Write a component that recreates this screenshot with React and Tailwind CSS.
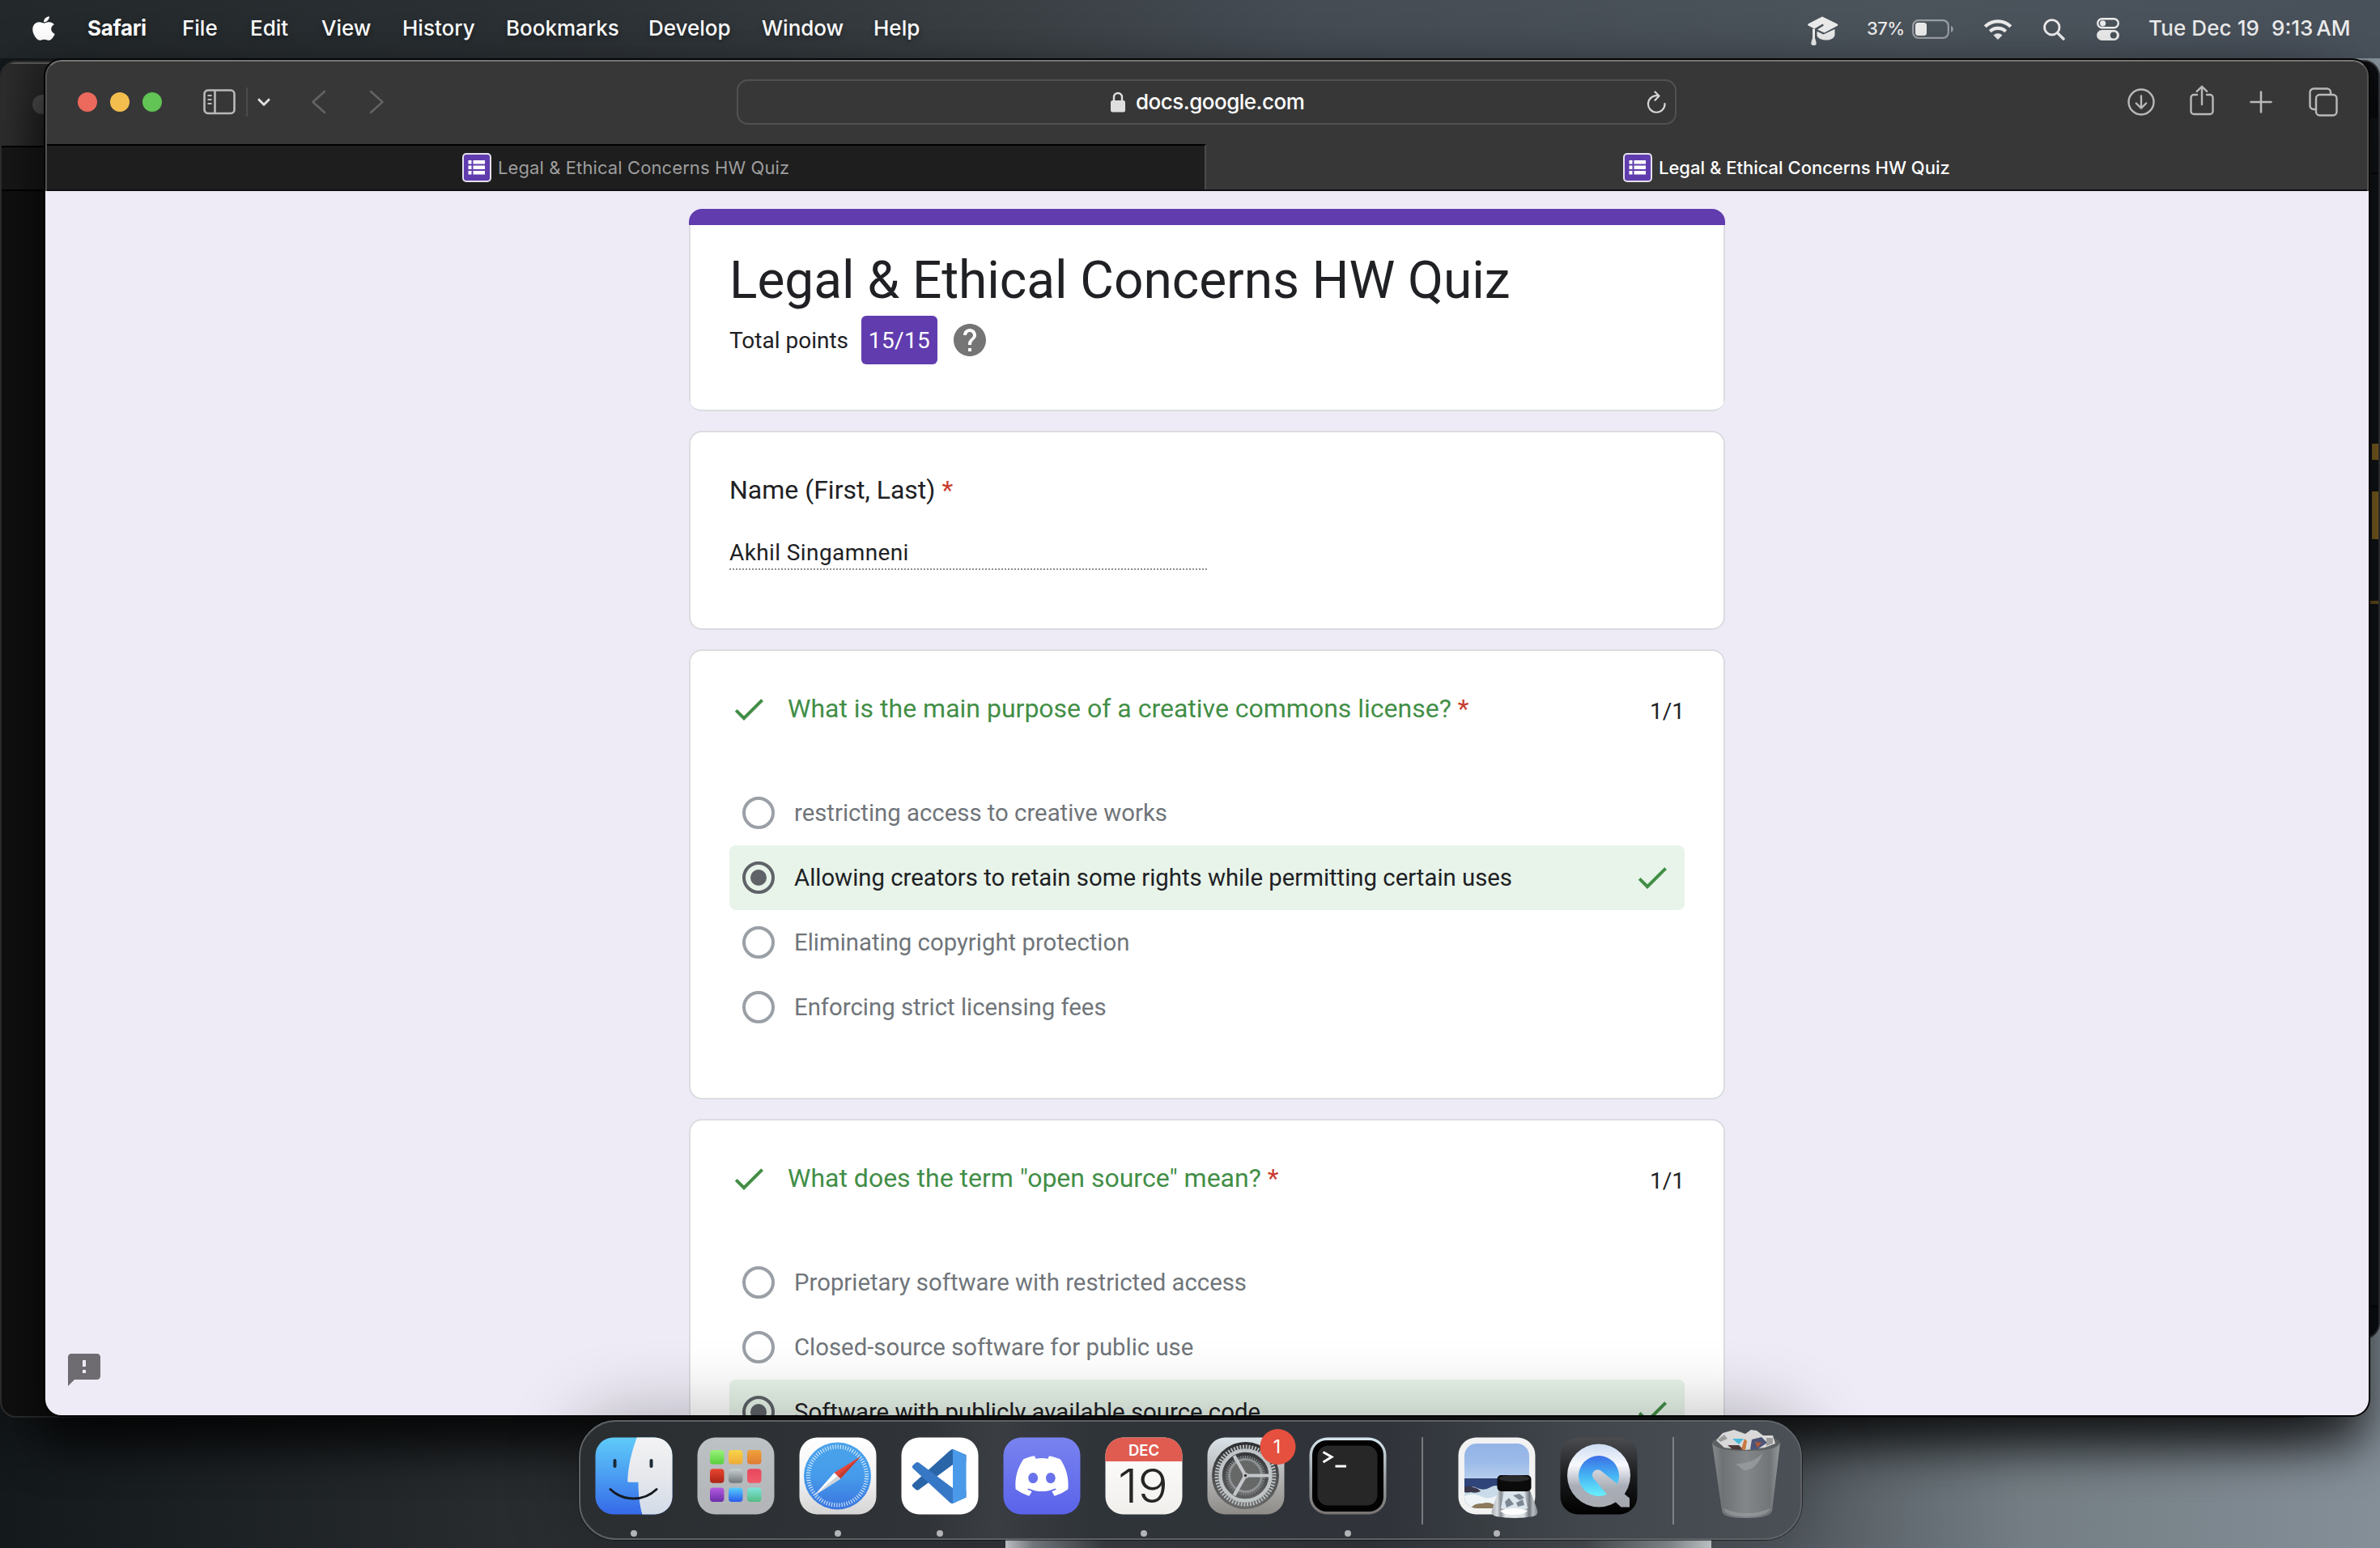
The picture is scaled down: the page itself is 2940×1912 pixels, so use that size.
import React from "react";
import { FaApple, FaDiscord } from "react-icons/fa";

const UI = "font-['Inter',sans-serif]";

function Apple() {
  return <FaApple className="h-[34px] w-[28px]" preserveAspectRatio="none" />;
}

function MenuBar() {
  const items = [
    ["Safari", "w-[117px] font-bold tracking-[-0.35px]"],
    ["File", "w-[84px] font-medium"],
    ["Edit", "w-[88px] font-medium"],
    ["View", "w-[100px] font-medium"],
    ["History", "w-[128px] font-medium"],
    ["Bookmarks", "w-[176px] font-medium"],
    ["Develop", "w-[140px] font-medium"],
    ["Window", "w-[138px] font-medium"],
    ["Help", "w-[60px] font-medium"],
  ];
  return (
    <header className={`relative z-0 flex h-[72px] w-full items-center text-[26px] leading-[32px] text-white ${UI}`}>
      <div className="ml-[40px] w-[68px] pb-[3px]"><Apple /></div>
      {items.map(([t, c]) => (
        <span key={t} className={`${c} whitespace-nowrap pb-[3px] [text-shadow:0_3px_6px_rgba(0,0,0,.35)]`}>{t}</span>
      ))}
      <div className="ml-auto flex items-center text-[#ececec]">
        <svg width="38" height="36" viewBox="0 0 38 36" fill="currentColor" className="mt-[3px]">
          <path d="M18 0.5 36.5 9.5a1.6 1.6 0 0 1 0 2.6L20.5 20.4 12 16.6 20 11.4 18.6 9.6 8.4 15.6 1 11.8a1.6 1.6 0 0 1 0-2.6z" />
          <path d="M11.5 18.8 19.5 22.6 33.5 16v7.5c-1 4-5.500 6-10.500 6s-10-2-11.500-5z" />
          <path d="M6 15.500h3V27l1.700 5.500c0 3-1 3.500-3.200 3.500s-3.200-.5-3.200-3.500L6 27z" />
        </svg>
        <span className="ml-[35px] w-[56px] whitespace-nowrap pb-[2px] text-[22px] font-medium tracking-[-0.5px]">37%</span>
        <svg width="52" height="24" viewBox="0 0 52 24" fill="none">
          <rect x="1.200" y="1.200" width="43.600" height="21.600" rx="6.500" stroke="#9a9fa4" strokeWidth="2.200" />
          <path d="M48 8c2.200 1 2.800 2.500 2.800 4s-.6 3-2.800 4z" fill="#9a9fa4" />
          <rect x="4" y="4" width="14" height="16" rx="3.500" fill="#ececec" />
        </svg>
        <svg width="36" height="27" viewBox="0 0 36 27" fill="none" className="ml-[36px]" stroke="currentColor" strokeWidth="4.200">
          <path d="M2.200 9.800a22.500 22.500 0 0 1 31.600 0" />
          <path d="M8.300 15.800a14 14 0 0 1 19.400 0" />
          <path d="M18 26l-5.500-5.600a8 8 0 0 1 11 0z" fill="currentColor" stroke="none" />
        </svg>
        <svg width="27" height="27" viewBox="0 0 27 27" fill="none" stroke="currentColor" className="ml-[38px]">
          <circle cx="10.800" cy="10.800" r="9.200" strokeWidth="2.800" />
          <path d="M17.600 17.600 25 25" strokeWidth="3.400" strokeLinecap="round" />
        </svg>
        <svg width="28" height="28" viewBox="0 0 28 28" fill="none" className="ml-[39px]">
          <rect x="1.200" y="1.200" width="25.600" height="11.100" rx="5.500" stroke="currentColor" strokeWidth="2.400" />
          <circle cx="7.600" cy="6.800" r="3.600" fill="currentColor" />
          <rect x="0" y="15" width="28" height="13" rx="6.500" fill="currentColor" />
          <circle cx="20.800" cy="21.500" r="4" fill="#4a525a" />
        </svg>
        <span className="ml-[36px] w-[152px] whitespace-nowrap pb-[3px] font-medium tracking-[0.1px]">Tue Dec 19</span>
        <span className="mr-[34px] flex w-[100px] gap-[4px] whitespace-nowrap pb-[3px] font-medium">
          <span>9:13</span>
          <span>AM</span>
        </span>
      </div>
    </header>
  );
}

function FormsIcon() {
  return (
    <svg width="36" height="36" viewBox="0 0 36 36" className="shrink-0">
      <rect width="36" height="36" rx="5" fill="#e4e0ee" />
      <rect x="2" y="2" width="32" height="32" rx="3" fill="#603cae" />
      {[9, 15.500, 22].map((y) => (
        <g key={y} fill="#fff">
          <rect x="7.500" y={y} width="4" height="4.500" />
          <rect x="13.500" y={y} width="14.500" height="4.500" />
        </g>
      ))}
    </svg>
  );
}

function Toolbar() {
  return (
    <div className="flex h-[102px] items-center pb-[2px]">
      <div className="ml-[38px] flex gap-[16px]">
        <i className="size-[24px] rounded-full bg-[#ec695e]" />
        <i className="size-[24px] rounded-full bg-[#f4be4f]" />
        <i className="size-[24px] rounded-full bg-[#61c454]" />
      </div>
      <svg width="40" height="32" viewBox="0 0 40 32" fill="none" stroke="#b9b9b9" strokeWidth="2.600" className="ml-[51px]">
        <rect x="1.500" y="1.500" width="37" height="28.500" rx="4.500" />
        <path d="M14.500 1.500V30" />
        <path d="M5.500 8h5M5.500 13h5M5.500 18h5" strokeWidth="2" />
      </svg>
      <div className="ml-[13px] h-[36px] w-[2px] bg-[#4b4b4b]" />
      <svg width="16" height="11" viewBox="0 0 16 11" fill="none" stroke="#dedede" strokeWidth="3" strokeLinecap="round" strokeLinejoin="round" className="ml-[12px]">
        <path d="M2 2.200 8 8.200l6-6" />
      </svg>
      <svg width="19" height="30" viewBox="0 0 19 30" fill="none" stroke="#636363" strokeWidth="2.600" strokeLinecap="round" strokeLinejoin="round" className="ml-[50px]">
        <path d="M17 2 2.500 15 17 28" />
      </svg>
      <svg width="19" height="30" viewBox="0 0 19 30" fill="none" stroke="#636363" strokeWidth="2.600" strokeLinecap="round" strokeLinejoin="round" className="ml-[53px]">
        <path d="M2 2 16.500 15 2 28" />
      </svg>
      <div className="ml-[435px] flex h-[56px] w-[1161px] items-center rounded-[14px] border-2 border-[#515151] text-white">
        <svg width="18" height="26" viewBox="0 0 18 26" className="ml-[460px]">
          <path d="M4 12V7a5 5 0 0 1 10 0v5" fill="none" stroke="#dfdfdf" strokeWidth="2.400" />
          <rect x="0" y="11" width="18" height="14.500" rx="2.500" fill="#dfdfdf" />
        </svg>
        <span className="ml-[13px] pb-[1px] text-[26px] font-medium tracking-[-0.5px]">docs.google.com</span>
        <svg width="25" height="28" viewBox="0 0 25 28" fill="none" stroke="#d6d6d6" strokeWidth="2.200" strokeLinecap="round" strokeLinejoin="round" className="ml-auto mr-[10px]">
          <path d="M14.500 6.400A10.300 10.300 0 1 0 22.500 16" />
          <path d="M10.500 1.500 15.500 6.500 10.500 11.800" />
        </svg>
      </div>
      <div className="ml-auto flex items-center text-[#b9b9b9]">
        <svg width="34" height="34" viewBox="0 0 34 34" fill="none" stroke="currentColor" strokeWidth="2.400" strokeLinecap="round" strokeLinejoin="round">
          <circle cx="17" cy="17" r="15.500" />
          <path d="M17 9.500v15M10.800 18.500l6.200 6.200 6.200-6.200" />
        </svg>
        <svg width="30" height="38" viewBox="0 0 30 38" fill="none" stroke="currentColor" strokeWidth="2.400" strokeLinecap="round" strokeLinejoin="round" className="mb-[4px] ml-[43px]">
          <path d="M9 12H5a3.500 3.500 0 0 0-3.500 3.500v17A3.500 3.500 0 0 0 5 36h20a3.500 3.500 0 0 0 3.500-3.500v-17A3.500 3.500 0 0 0 25 12h-4" />
          <path d="M15 24V2M8.800 7.800 15 1.800l6.200 6" />
        </svg>
        <svg width="28" height="28" viewBox="0 0 28 28" stroke="currentColor" strokeWidth="2.600" strokeLinecap="round" className="ml-[44px]">
          <path d="M14 1.500v25M1.500 14h25" />
        </svg>
        <svg width="36" height="36" viewBox="0 0 36 36" fill="none" stroke="currentColor" strokeWidth="2.400" className="ml-[45px] mr-[36px]">
          <path d="M9 27H6a4.500 4.500 0 0 1-4.500-4.500V6A4.500 4.500 0 0 1 6 1.500h16.500A4.500 4.500 0 0 1 27 6v3" />
          <rect x="9" y="9" width="25.500" height="25.500" rx="4.500" />
        </svg>
      </div>
    </div>
  );
}

function Tabs() {
  return (
    <div className="flex h-[58px] border-b-2 border-[#101010] text-[22px]">
      <div className="flex w-[1432px] items-center justify-center gap-[8px] border-r-2 border-t-2 border-r-[#4b4b4b] border-t-black bg-[#1e1e1e] pr-[2px] text-[#9d9d9d]">
        <FormsIcon />
        <span className="w-[358px] whitespace-nowrap tracking-[0.1px]">Legal &amp; Ethical Concerns HW Quiz</span>
      </div>
      <div className="flex flex-1 items-center justify-center gap-[8px] pt-[2px] text-white">
        <FormsIcon />
        <span className="w-[360px] whitespace-nowrap font-medium">Legal &amp; Ethical Concerns HW Quiz</span>
      </div>
    </div>
  );
}

function Check() {
  return (
    <svg width="48" height="48" viewBox="0 0 24 24" fill="#428e46" className="shrink-0">
      <path d="M9 16.170 4.830 12l-1.420 1.410L9 19 21 7l-1.410-1.410z" />
    </svg>
  );
}

function Option({ text, selected }) {
  return (
    <div className={`flex h-[80px] shrink-0 items-center rounded-[8px] px-[16px] ${selected ? "bg-[#e8f4ea] text-[#202124]" : "text-[#70757a]"}`}>
      <span className={`flex size-[40px] items-center justify-center rounded-full border-4 ${selected ? "border-[#5f6368]" : "border-[#9aa0a6]"}`}>
        {selected && <i className="size-[20px] rounded-full bg-[#5f6368]" />}
      </span>
      <span className="ml-[24px] flex-1 whitespace-nowrap text-[29.33px] leading-[40px]">{text}</span>
      {selected && <Check />}
    </div>
  );
}

function Question({ title, options, answer }) {
  return (
    <section className="flex h-[556px] shrink-0 flex-col rounded-[16px] border-2 border-[#dadce0] bg-white px-[48px] pt-[47px]">
      <div className="flex h-[48px] items-start">
        <span className="mt-px"><Check /></span>
        <h2 className="ml-[24px] flex-1 whitespace-nowrap text-[32px] leading-[48px] text-[#428e46]">
          {title} <span className="text-[#c93b2e]">*</span>
        </h2>
        <span className="mt-[4px] text-[28px] leading-[48px] text-[#202124]">1/1</span>
      </div>
      <div className="mt-[65px] flex flex-col">
        {options.map((o, i) => <Option key={o} text={o} selected={i === answer} />)}
      </div>
    </section>
  );
}

function Form() {
  return (
    <main className="flex w-[1280px] shrink-0 flex-col gap-[24px] font-['Roboto',sans-serif] text-[#202124]">
      <section className="flex h-[250px] shrink-0 flex-col overflow-hidden rounded-[16px] border-b-2 border-[#dadce0] bg-white">
        <div className="h-[20px] bg-[#603cae]" />
        <div className="flex flex-1 flex-col border-x-2 border-[#dadce0] px-[48px] pt-[29px]">
          <h1 className="whitespace-nowrap text-[64px] leading-[80px] tracking-[-0.05px]">Legal &amp; Ethical Concerns HW Quiz</h1>
          <div className="mt-[3px] flex h-[60px] items-center text-[28px]">
            <span className="w-[163px] whitespace-nowrap pt-[2px]">Total points</span>
            <span className="flex h-[60px] w-[94px] items-center justify-center rounded-[6px] bg-[#603cae] pt-px tracking-[0.4px] text-white">15/15</span>
            <svg width="48" height="48" viewBox="0 0 24 24" fill="#757575" className="ml-[16px]">
              <path d="M12 2C6.480 2 2 6.480 2 12s4.480 10 10 10 10-4.480 10-10S17.520 2 12 2zm1 17h-2v-2h2v2zm2.070-7.750l-.9.920C13.450 12.900 13 13.500 13 15h-2v-.5c0-1.100.45-2.100 1.170-2.830l1.240-1.260c.37-.36.59-.86.59-1.410 0-1.100-.9-2-2-2s-2 .9-2 2H8c0-2.210 1.790-4 4-4s4 1.790 4 4c0 .88-.36 1.680-.93 2.250z" />
            </svg>
          </div>
        </div>
      </section>
      <section className="flex h-[246px] shrink-0 flex-col rounded-[16px] border-2 border-[#dadce0] bg-white px-[48px] pt-[47px]">
        <h2 className="text-[32px] leading-[48px]">Name (First, Last) <span className="text-[#c93b2e]">*</span></h2>
        <p className="mt-[34px] h-[41px] w-[590px] border-b-2 border-dotted border-[#8f8f8f] text-[28px] leading-[40px] tracking-[0.4px]">Akhil Singamneni</p>
      </section>
      <Question
        title="What is the main purpose of a creative commons license?"
        options={[
          "restricting access to creative works",
          "Allowing creators to retain some rights while permitting certain uses",
          "Eliminating copyright protection",
          "Enforcing strict licensing fees",
        ]}
        answer={1}
      />
      <Question
        title={'What does the term "open source" mean?'}
        options={[
          "Proprietary software with restricted access",
          "Closed-source software for public use",
          "Software with publicly available source code",
        ]}
        answer={2}
      />
    </main>
  );
}

function SafariWindow() {
  return (
    <div className="absolute left-[56px] top-[74px] z-20 flex h-[1674px] w-[2870px] flex-col overflow-hidden rounded-[20px] bg-[#373737] shadow-[0_0_0_2px_#050505,0_36px_60px_rgba(0,0,0,.75)]">
      <div className={`flex shrink-0 flex-col rounded-t-[20px] border-x-2 border-t-2 border-x-[#515151] border-t-[#757575] ${UI}`}>
        <Toolbar />
        <Tabs />
      </div>
      <div className="relative flex min-h-0 flex-1 justify-center overflow-hidden bg-[#eeebf6] pt-[22px]">
        <Form />
        <svg width="48" height="48" viewBox="0 0 24 24" fill="#6e6c71" className="absolute bottom-[32px] left-[24px]">
          <path d="M20 2H4c-1.100 0-1.990.9-1.990 2L2 22l4-4h14c1.100 0 2-.9 2-2V4c0-1.100-.9-2-2-2zm-7 12h-2v-2h2v2zm0-4h-2V6h2v4z" />
        </svg>
      </div>
    </div>
  );
}

function BackWindows() {
  return (
    <>
      <div className="absolute left-[2000px] top-[74px] z-0 flex h-[1580px] w-[940px] flex-col items-end overflow-hidden rounded-[20px] border-2 border-[#34373c] bg-[#12161a]">
        <div className="h-[70px] w-full bg-[#0a0c0f]" />
        <div className="mt-[67px] h-[2px] w-full bg-[#07090b]" />
        <div className="mt-[333px] h-[20px] w-[8px] bg-[#896923]" />
        <div className="mt-[39px] h-[59px] w-[8px] bg-[#896923]" />
        <div className="mt-[76px] h-[4px] w-full bg-[#6d5420]" />
        <div className="mt-[866px] h-[3px] w-full bg-[#07090b]" />
        <div className="w-full flex-1 bg-[#0d1115]" />
      </div>
      <div className="absolute left-0 top-[75px] z-10 flex h-[1676px] w-[2860px] flex-col overflow-hidden rounded-[20px] border-2 border-[#2c2c2c] bg-[#0f0f0f] shadow-[0_20px_70px_rgba(0,0,0,.45)]">
        <div className="flex h-[103px] items-center bg-[linear-gradient(90deg,#2d2d2d,#212121_60px)] shadow-[inset_0_2px_0_#555]">
          <i className="ml-[38px] size-[24px] rounded-full bg-[#464646]" />
        </div>
        <div className="h-[56px] border-y-2 border-black bg-[#161616]" />
      </div>
    </>
  );
}

function Tile({ children, dot, className = "" }) {
  return (
    <div className={`flex w-[96px] shrink-0 flex-col items-center ${className}`}>
      <svg width="96" height="96" viewBox="0 0 96 96" className="overflow-visible">{children}</svg>
      <i className={`mt-[19px] size-[8px] rounded-full ${dot ? "bg-[#b2b4b8]" : ""}`} />
    </div>
  );
}

const Squircle = (p) => <rect x="0.500" y="0.500" width="95" height="95" rx="22" {...p} />;

function Grad({ id, stops }) {
  return (
    <linearGradient id={id} x1="0" y1="0" x2="0" y2="1">
      {stops.map((c, i) => <stop key={i} offset={i / (stops.length - 1)} stopColor={c} />)}
    </linearGradient>
  );
}

function Finder() {
  return (
    <>
      <defs>
        <Grad id="fb" stops={["#5fcbf8", "#4a9df2", "#3568e8"]} />
        <Grad id="fw" stops={["#f3f3f4", "#e6e8ec", "#d2dbe8"]} />
        <clipPath id="fc"><Squircle /></clipPath>
      </defs>
      <g clipPath="url(#fc)">
        <rect width="96" height="96" fill="url(#fb)" />
        <path d="M52 0C45 18 41 36 40.200 54q0 1.800 1.800 1.800H53.500C53.500 70 55 84 58.500 96H96V0z" fill="url(#fw)" />
      </g>
      <path d="M24.500 29v7M69.500 29v7" stroke="#1d2a38" strokeWidth="4" strokeLinecap="round" />
      <path d="M19 64.500Q31 76 47.500 76T76 64.500" fill="none" stroke="#151a20" strokeWidth="3" strokeLinecap="round" />
    </>
  );
}

function Launchpad() {
  const c = [
    ["#9af27c", "#58cf3a"], ["#f8d44c", "#edab35"], ["#f0a23a", "#df7a32"],
    ["#e8452f", "#ac2417"], ["#c8d0d4", "#707678"], ["#e8465e", "#f05a68"],
    ["#b45ae2", "#6c2fa8"], ["#56d0fb", "#2b5bec"], ["#7fe6dc", "#54bb84"],
  ];
  return (
    <>
      <defs>
        <Grad id="lp" stops={["#bdc2c5", "#b2b4b7"]} />
        {c.map((s, i) => <Grad key={i} id={`lp${i}`} stops={s} />)}
      </defs>
      <Squircle fill="url(#lp)" />
      {c.map((_, i) => (
        <rect key={i} x={16 + (i % 3) * 23} y={16 + Math.floor(i / 3) * 23.200} width="17.500" height="17.500" rx="4" fill={`url(#lp${i})`} />
      ))}
    </>
  );
}

function SafariIcon() {
  return (
    <>
      <defs>
        <Grad id="sw" stops={["#ffffff", "#f5f5f5", "#d4d4d4"]} />
        <Grad id="sb" stops={["#4aa3ea", "#469ceb", "#3a74de"]} />
      </defs>
      <Squircle fill="url(#sw)" />
      <circle cx="47.500" cy="48" r="41.500" fill="url(#sb)" />
      <circle cx="47.500" cy="48" r="36" fill="none" stroke="#d8ebfb" strokeWidth="5" strokeDasharray="1.100 2.041" />
      <path d="M76 24 51.200 51.600 43.600 44z" fill="#e5483a" />
      <path d="M76 24 51.200 51.600 47.500 48z" fill="#c23b30" />
      <path d="M19 72 43.600 44 51.200 51.600z" fill="#fff" />
      <path d="M19 72 47.500 48 51.200 51.600z" fill="#cfd4da" />
    </>
  );
}

function VSCode() {
  return (
    <>
      <Squircle fill="#fff" />
      <path d="M64 15 80.500 22V30L64 34 22 65q-2 1.200-3.500 0L14.500 61.500q-1.500-1.700 0-3.500L60 17q2-2 4-2z" fill="#2a65a8" />
      <path d="M64 82 80.500 74.500V66L64 63 22 31.500q-2-1.200-3.500 0L14.500 35q-1.500 1.700 0 3.500L60 80.500q2 2 4 1.500z" fill="#3778c6" />
      <path d="M64 14.800 78.500 21.500q2 1 2 3.200V71.800q0 2.200-2 3.200L64 82z" fill="#4a9ae9" />
    </>
  );
}

function Discord() {
  return (
    <>
      <defs><Grad id="dc" stops={["#7983ef", "#5a63ea"]} /></defs>
      <Squircle fill="url(#dc)" />
      <FaDiscord x="12.500" y="12.500" size={71} color="#fff" />
    </>
  );
}

function CalendarIcon() {
  return (
    <>
      <defs><clipPath id="cc"><Squircle /></clipPath><Grad id="cw" stops={["#ffffff", "#f0efec"]} /></defs>
      <g clipPath="url(#cc)">
        <rect width="96" height="96" fill="url(#cw)" />
        <rect width="96" height="30" fill="#e05c50" />
      </g>
      <text x="48" y="23" textAnchor="middle" fontSize="18.500" fontWeight="600" fill="#fff" fontFamily="Inter, sans-serif">DEC</text>
      <text x="47" y="81" textAnchor="middle" fontSize="58" fontWeight="300" fill="#262626" fontFamily="Inter, sans-serif" textLength="62" lengthAdjust="spacingAndGlyphs">19</text>
    </>
  );
}

function Settings() {
  return (
    <>
      <defs><Grad id="st" stops={["#d9e3e8", "#b4b5b5", "#8e8b87"]} /><Grad id="sg" stops={["#2c2e30", "#6a6a6a"]} /></defs>
      <Squircle fill="url(#st)" />
      <circle cx="47.500" cy="47.500" r="41.500" fill="url(#sg)" />
      <circle cx="47.500" cy="47.500" r="35.500" fill="none" stroke="#b9bdbf" strokeWidth="5" strokeDasharray="2 1.717" />
      <circle cx="47.500" cy="47.500" r="31" fill="none" stroke="#bfc4c6" strokeWidth="4.500" />
      <circle cx="47.500" cy="47.500" r="23" fill="none" stroke="#7f8385" strokeWidth="3" strokeDasharray="1.500 1.390" />
      <circle cx="47.500" cy="47.500" r="20" fill="#666767" stroke="#8d9193" strokeWidth="3" />
      <path d="M47.500 47.500H77M47.500 47.500 33.500 23M47.500 47.500 33.500 72" stroke="#c3c7c9" strokeWidth="4.200" />
      <circle cx="47.500" cy="47.500" r="3.500" fill="#c3c7c9" />
      <circle cx="47.500" cy="47.500" r="1.800" fill="#333" />
      <circle cx="87.500" cy="12" r="22" fill="#e5503f" />
      <text x="86.500" y="20" textAnchor="middle" fontSize="23" fill="#fff" fontFamily="Inter, sans-serif">1</text>
    </>
  );
}

function Terminal() {
  return (
    <>
      <defs><Grad id="tm" stops={["#d6e6ee", "#9aa0a4", "#787472"]} /></defs>
      <Squircle fill="url(#tm)" />
      <rect x="4" y="4" width="88" height="88" rx="18" fill="#020202" />
      <rect x="10.500" y="10.500" width="74" height="74" rx="13" fill="#272727" />
      <path d="M17.500 18.500 28 24.500 17.500 31" fill="none" stroke="#fff" strokeWidth="3" />
      <path d="M32.500 36H46" stroke="#fff" strokeWidth="3" />
    </>
  );
}

function Preview() {
  return (
    <>
      <defs>
        <Grad id="ps" stops={["#93b3e8", "#9cbbe9", "#b9d0ee"]} />
        <clipPath id="pc"><rect x="8" y="8" width="80" height="80" rx="15" /></clipPath>
        <linearGradient id="pg">
          <stop offset="0" stopColor="#a8adb2" />
          <stop offset=".12" stopColor="#d8dde1" />
          <stop offset=".2" stopColor="#868c93" />
          <stop offset=".3" stopColor="#e2e7eb" />
          <stop offset=".7" stopColor="#dde3e8" />
          <stop offset=".82" stopColor="#6f757c" />
          <stop offset=".9" stopColor="#b9bec3" />
          <stop offset="1" stopColor="#7e8489" />
        </linearGradient>
      </defs>
      <Squircle fill="#f2f2f2" />
      <g clipPath="url(#pc)">
        <rect x="8" y="8" width="80" height="46" fill="url(#ps)" />
        <rect x="8" y="51" width="80" height="38" fill="#2f4479" />
        <path d="M8 63q8-4 16 0t16-1 16 2 16-3 16 1v27H8z" fill="#c9dbe8" />
        <path d="M8 73q10-5 20 0t20-1 12 4v12H8z" fill="#eef4f7" />
        <path d="M8 62q6-3 11 0 6 1 9 5-6 3-12 1-5 1-8 0z" fill="#39384a" />
        <path d="M16 88q4-7 14-6 10-3 18 4v2z" fill="#8b7a5c" />
      </g>
      <path d="M50 66H89L98 90q2 6-5 8-23 4-46 0-7-2-5-8z" fill="url(#pg)" />
      <path d="M57 68h25l4 20q-17 5-33 0z" fill="#dbe5ec" />
      <path d="M68 72l8-2 6 5-6 3zM58 80l5-5 6 8-9 4zM72 81l8-4 2 7-8 2z" fill="#7c8794" />
      <path d="M52 91q18-6 34 0-4 5-17 5t-17-5z" fill="#fff" />
      <rect x="48.500" y="47" width="42" height="20" rx="5" fill="#0b0b0c" />
      <ellipse cx="69.500" cy="51" rx="19" ry="4" fill="#2a2b2d" />
    </>
  );
}

function QuickTime() {
  return (
    <>
      <defs>
        <Grad id="qk" stops={["#4a4c50", "#1b1c1e", "#000000"]} />
        <Grad id="qr" stops={["#cddcf2", "#f7f9fd", "#a9adb8", "#a9acb2"]} />
        <Grad id="qb" stops={["#3b6fe6", "#46b4f4", "#6af0fb"]} />
        <Grad id="qt" stops={["#d3d6dd", "#a9adb5", "#a4a7ad"]} />
      </defs>
      <Squircle fill="url(#qk)" />
      <circle cx="48" cy="47.500" r="39" fill="url(#qr)" />
      <circle cx="48" cy="48" r="25" fill="url(#qb)" />
      <path d="M41.800 51.500a6.600 6.600 0 0 1 9.700-9.300L71 58l9.500 13 5.500 4.500V86.500H75.500L69.500 81 59.500 72.500z" fill="url(#qt)" />
    </>
  );
}

function Trash() {
  return (
    <>
      <defs>
        <linearGradient id="tr"><stop offset="0" stopColor="#888b8e" /><stop offset=".15" stopColor="#6f7275" /><stop offset=".5" stopColor="#84878a" /><stop offset=".85" stopColor="#727578" /><stop offset="1" stopColor="#96999c" /></linearGradient>
      </defs>
      <path d="M5 7Q46 24 89 7L79 91Q77 100 47 100T17 91z" fill="url(#tr)" />
      <path d="M5 7Q6 2 20 0H74Q88 2 89 7 86 17 47 17T5 7z" fill="#5c6063" />
      <path d="M10 4 18-5 32-9 46-4 53-9 60-8 68-2 80-2 83 8 70 13 46 16 20 13z" fill="#d9d9d9" />
      <path d="M24 10l14 0 6 6-14-1z" fill="#4a3a38" /><path d="M30 2l14 0-6 7z" fill="#48b8d8" /><path d="M45 2l3 3-2 11-5-1z" fill="#c87840" />
      <path d="M54 3l12-3 7 7-12 8-9 0z" fill="#4d5577" /><path d="M58 6l8 1-5 6z" fill="#b35736" />
      <path d="M12 3l8-6 4 5-9 4zM72 1l8 0 0 7-8 3z" fill="#9c9c9c" />
      <path d="M34 33q22 0 34-14-8 22-24 22z" fill="#a5a7a9" opacity=".55" />
      <path d="M19 88q28 12 58 0-3 10-30 10T19 88z" fill="#9da0a3" opacity=".6" />
    </>
  );
}

function Dock() {
  return (
    <div className="absolute left-[715px] top-[1754px] z-30 flex h-[148px] w-[1511px] items-start gap-[30px] rounded-[46px] border-2 border-[#5d6165] bg-[linear-gradient(90deg,#2b2e31_0%,#303337_28%,#3a3d42_34%,#2f3439_42%,#30343a_66%,#40464b_82%,#4b5057_100%)] pl-[18px] pt-[19px] shadow-[0_0_0_1px_rgba(0,0,0,.5),0_-4px_90px_rgba(0,0,0,.3)]">
      <Tile dot><Finder /></Tile>
      <Tile><Launchpad /></Tile>
      <Tile dot><SafariIcon /></Tile>
      <Tile dot><VSCode /></Tile>
      <Tile><Discord /></Tile>
      <Tile dot><CalendarIcon /></Tile>
      <Tile><Settings /></Tile>
      <Tile dot><Terminal /></Tile>
      <div className="ml-[13px] h-[108px] w-[2px] shrink-0 bg-[#777b7f]" />
      <Tile dot className="ml-[13px]"><Preview /></Tile>
      <Tile><QuickTime /></Tile>
      <div className="ml-[13px] h-[108px] w-[2px] shrink-0 bg-[#7f8387]" />
      <Tile className="ml-[12px]"><Trash /></Tile>
    </div>
  );
}

export default function App() {
  return (
    <div className="relative h-[1912px] w-[2940px] overflow-hidden bg-[linear-gradient(90deg,#14191c_0%,#2c3033_26%,#34383d_45%,#52595f_75%,#737d83_85%,#858f98_100%)]">
      <div className="absolute inset-x-0 top-0 h-[72px] bg-[linear-gradient(90deg,#23282b_0%,#2c3135_24%,#393f43_42%,#454c54_55%,#4b535b_80%,#48505a_100%)]" />
      <MenuBar />
      <BackWindows />
      <SafariWindow />
      <div className="absolute left-[1242px] top-[1902px] z-20 h-[10px] w-[872px] bg-[linear-gradient(90deg,#d5d9dc_0%,#7f858c_4%,#3c4045_14%,#33373d_50%,#4a4f55_82%,#8d9398_94%,#d5dadc_100%)]" />
      <Dock />
    </div>
  );
}
